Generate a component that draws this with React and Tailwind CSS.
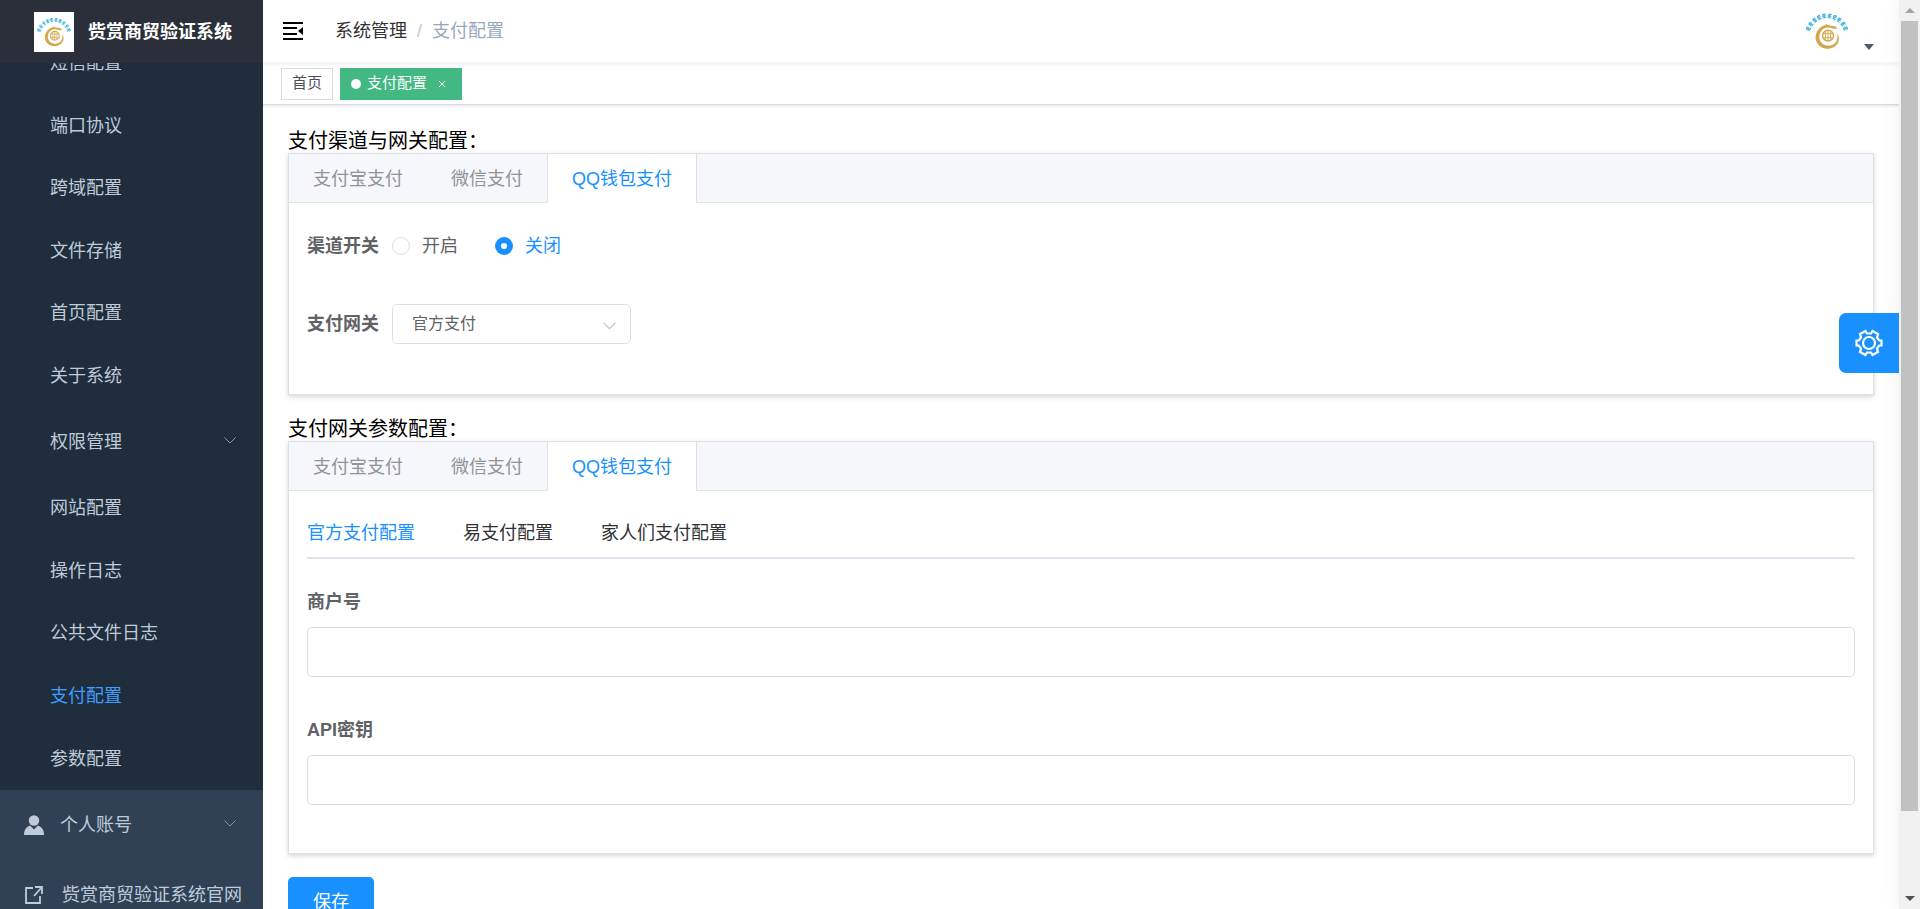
import { useState } from 'react'

const menuTop = ['短信配置', '端口协议', '跨域配置', '文件存储', '首页配置', '关于系统']
const menuBottom = ['网站配置', '操作日志', '公共文件日志', '支付配置', '参数配置']
const channels = ['支付宝支付', '微信支付', 'QQ钱包支付']
const gateways = ['官方支付配置', '易支付配置', '家人们支付配置']
const ringAngles = [-69, -54, -38, -23, -8, 8, 23, 38, 54, 69]

function Logo({ className }) {
  return (
    <svg viewBox="0 0 48 48" className={className} fill="none" aria-hidden="true">
      {ringAngles.map(a => (
        <path
          key={a}
          transform={`rotate(${a} 24 28.5)`}
          d="M22.400 7.800h3.200M24 7v4.400M22.200 9.400h3.600M22.400 11.200h3.200M22.800 8v2.500"
          stroke="#3bb3da"
          strokeWidth="0.900"
        />
      ))}
      <path
        d="M18.500 20c1.500-1 2.500-1.500 4.500-1.500l-1-1.500c2 1 4 1.500 6 2l4 .500 2 2.500-4.500-.300c-4-1.700-8-1.200-10.500 1.800-3.500 4-3 9.500.500 12.500 4 3.300 10.500 2.500 13.500-2 1.700-3 1.500-6 0-8.500 3 3 3.500 8 .500 11.500-4 5-12 5.500-16.500 1.500-5.500-4.500-5.500-13.500 1.500-18.500z"
        fill="#d2a84f"
      />
      <circle cx="25" cy="28.500" r="5.200" stroke="#d2a84f" strokeWidth="1.400" />
      <path d="M21 26.500h8M21 30.500h8M25 23.500v10M22.500 24.500v8M27.500 24.500v8" stroke="#d2a84f" strokeWidth="0.900" />
    </svg>
  )
}

function Chevron({ className }) {
  return (
    <svg viewBox="0 0 12 7" className={className} fill="none" stroke="currentColor" aria-hidden="true">
      <path d="M0.500 0.500l5.500 5.500 5.500-5.500" />
    </svg>
  )
}

function SubMenu({ items, active, onSelect, className }) {
  return (
    <ul className={`flex flex-col bg-[#1f2d3d] ${className}`}>
      {items.map(item => (
        <li key={item} className="flex-1 flex">
          <button
            onClick={() => onSelect(item)}
            className={`w-full pl-[50px] text-left cursor-pointer ${active === item ? 'text-[#409eff]' : 'text-[#bfcbd9]'}`}
          >
            {item}
          </button>
        </li>
      ))}
    </ul>
  )
}

function Sidebar() {
  const [active, setActive] = useState('支付配置')

  return (
    <aside className="w-[263px] shrink-0 flex flex-col overflow-hidden bg-[#304156] text-[#bfcbd9]">
      <div className="h-[63px] shrink-0 z-10 flex items-center gap-[14px] pl-[34px] bg-[#2b2f3a]">
        <Logo className="w-10 h-10 bg-white" />
        <h1 className="text-white text-lg font-bold">赀赏商贸验证系统</h1>
      </div>
      <nav className="-mt-[31px] text-lg">
        <SubMenu items={menuTop} active={active} onSelect={setActive} className="h-[375px]" />
        <button className="w-full h-[70px] pl-[50px] pr-[27px] flex items-center justify-between bg-[#1f2d3d] cursor-pointer">
          权限管理
          <Chevron className="w-3 h-[7px] mb-1 text-[#909399]" />
        </button>
        <SubMenu items={menuBottom} active={active} onSelect={setActive} className="h-[313px]" />
        <button className="w-full h-[70px] pl-6 pr-[27px] flex items-center cursor-pointer">
          <svg viewBox="0 0 20 20" className="w-5 h-5 mr-4" fill="currentColor">
            <circle cx="10" cy="5.500" r="5.200" />
            <path d="M0 20c0-5 2-8 6-9.500l4 4 4-4c4 1.500 6 4.500 6 9.500z" />
          </svg>
          <span className="flex-1 text-left">个人账号</span>
          <Chevron className="w-3 h-[7px] mb-1 text-[#909399]" />
        </button>
        <a href="#" className="h-[70px] pl-6 flex items-center whitespace-nowrap">
          <svg viewBox="0 0 20 20" className="w-5 h-5 mr-[18px]" fill="none" stroke="currentColor" strokeWidth="1.800">
            <path d="M9 3H2v15h14v-7M11 2h7v7M18 2l-8 9" />
          </svg>
          赀赏商贸验证系统官网
        </a>
      </nav>
    </aside>
  )
}

function Navbar() {
  return (
    <header className="h-[63px] shrink-0 flex items-center pl-5 pr-[25px] pb-[2px] text-lg shadow-[0_1px_4px_rgba(0,21,41,0.08)]">
      <button aria-label="收起菜单" className="mr-8 cursor-pointer">
        <svg viewBox="0 0 20 18" className="w-5 h-[18px]" fill="none" stroke="#000" strokeWidth="2">
          <path d="M0 1h20M0 6h14M0 12h14M0 17h20" />
          <path d="M20 5v8l-5-4z" fill="#000" stroke="none" />
        </svg>
      </button>
      <div className="flex gap-[10px]">
        <a href="#" className="text-[#303133]">系统管理</a>
        <span className="text-[#c0c4cc]">/</span>
        <span className="text-[#97a8be]">支付配置</span>
      </div>
      <button aria-label="用户菜单" className="ml-auto flex items-end gap-3 cursor-pointer">
        <Logo className="w-[50px] h-[50px]" />
        <svg viewBox="0 0 10 6" className="w-[10px] h-[6px] mb-[6px]" fill="#4f5b6b">
          <path d="M0 0h10l-5 6z" />
        </svg>
      </button>
    </header>
  )
}

function TagsView() {
  return (
    <div className="h-[42px] shrink-0 flex items-center gap-[7px] pl-[18px] border-b border-[#d8dce5] text-[15px] shadow-[0_1px_3px_rgba(0,0,0,0.12)]">
      <a href="#" className="h-8 px-[10px] flex items-center border border-[#d8dce5] text-[#495060]">首页</a>
      <div className="h-8 pl-[11px] pr-4 flex items-center bg-[#42b983] text-white">
        <span className="w-[10px] h-[10px] mr-[6px] rounded-full bg-white" />
        <a href="#">支付配置</a>
        <button aria-label="关闭标签" className="ml-[11px] cursor-pointer">
          <svg viewBox="0 0 8 8" className="w-2 h-2" stroke="#fff" strokeWidth="1">
            <path d="M1 1l6 6M7 1l-6 6" />
          </svg>
        </button>
      </div>
    </div>
  )
}

function TabCard({ title, children, className = '' }) {
  const [active, setActive] = useState('QQ钱包支付')

  return (
    <section className={className}>
      <h2 className="text-xl leading-6 text-black">{title}</h2>
      <div className="border border-[#dcdfe6] bg-white shadow-[0_2px_5px_rgba(0,0,0,0.16)]">
        <div role="tablist" className="flex h-[49px] bg-[#f5f7fa] border-b border-[#dfe4ed]">
          {channels.map(c => (
            <button
              key={c}
              role="tab"
              aria-selected={active === c}
              onClick={() => setActive(c)}
              className={`px-6 -mb-px text-lg cursor-pointer ${active === c ? 'bg-white text-[#1890ff] border-x border-[#dcdfe6]' : 'text-[#909399]'}`}
            >
              {c}
            </button>
          ))}
        </div>
        {children}
      </div>
    </section>
  )
}

function SwitchRadio({ label, checked, onChange }) {
  return (
    <label className={`flex items-center gap-3 cursor-pointer ${checked ? 'text-[#1890ff]' : 'text-[#606266]'}`}>
      <input
        type="radio"
        name="channel"
        checked={checked}
        onChange={onChange}
        className="appearance-none w-[18px] h-[18px] rounded-full border border-[#dcdfe6] bg-white checked:border-[6px] checked:border-[#1890ff]"
      />
      {label}
    </label>
  )
}

function Field({ id, label }) {
  return (
    <div className="flex flex-col mb-7">
      <label htmlFor={id} className="h-[50px] leading-[50px] font-bold text-[#606266]">{label}</label>
      <input id={id} type="text" className="h-[50px] px-[18px] rounded-[5px] border border-[#dcdfe6] bg-white outline-none" />
    </div>
  )
}

function App() {
  const [status, setStatus] = useState('关闭')
  const [gateway, setGateway] = useState(gateways[0])

  return (
    <div className="relative h-screen flex overflow-hidden bg-white font-['Liberation_Sans','Noto_Sans_CJK_SC',sans-serif]">
      <Sidebar />

      <div className="flex-1 min-w-0 flex flex-col">
        <Navbar />
        <TagsView />
        <main className="flex-1 overflow-hidden px-[25px] pt-6 text-lg">
          <TabCard title="支付渠道与网关配置：">
            <div className="px-[18px] pt-[18px] pb-[25px]">
              <div className="flex items-center h-[50px] mb-7">
                <span className="w-[85px] font-bold text-[#606266]">渠道开关</span>
                <div className="flex gap-[37px]">
                  <SwitchRadio label="开启" checked={status === '开启'} onChange={() => setStatus('开启')} />
                  <SwitchRadio label="关闭" checked={status === '关闭'} onChange={() => setStatus('关闭')} />
                </div>
              </div>
              <div className="flex items-center h-[50px] mb-5">
                <label htmlFor="gateway" className="w-[85px] font-bold text-[#606266]">支付网关</label>
                <div className="relative">
                  <select id="gateway" className="appearance-none w-[239px] h-10 px-[19px] rounded-[5px] border border-[#dcdfe6] bg-white text-base text-[#606266]">
                    <option>官方支付</option>
                    <option>易支付</option>
                    <option>家人们支付</option>
                  </select>
                  <Chevron className="absolute right-[15px] top-[18px] w-[13px] h-2 text-[#c0c4cc] pointer-events-none" />
                </div>
              </div>
            </div>
          </TabCard>

          <TabCard title="支付网关参数配置：" className="mt-[22px]">
            <div className="px-[18px] pt-[18px] pb-5">
              <div role="tablist" className="flex gap-12 h-[50px] mb-[18px] border-b-2 border-[#dfe4ed]">
                {gateways.map(g => (
                  <button
                    key={g}
                    role="tab"
                    aria-selected={gateway === g}
                    onClick={() => setGateway(g)}
                    className={`cursor-pointer ${gateway === g ? 'text-[#1890ff]' : 'text-[#303133]'}`}
                  >
                    {g}
                  </button>
                ))}
              </div>
              <Field id="mchId" label="商户号" />
              <Field id="apiKey" label="API密钥" />
            </div>
          </TabCard>

          <button className="mt-[23px] h-[50px] px-[25px] rounded-[5px] bg-[#1890ff] text-white cursor-pointer">保存</button>
        </main>
      </div>

      {/* right scrollbar */}
      <div className="w-[21px] shrink-0 flex flex-col items-center justify-between bg-[#f1f1f1] shadow-[0_0_20px_rgba(0,0,0,0.06)]">
        <svg viewBox="0 0 10 5" className="w-[10px] h-[5px] my-2" fill="#a3a3a3"><path d="M0 5h10l-5-5z" /></svg>
        <div className="w-[17px] h-[790px] mb-auto bg-[#c1c1c1]" />
        <svg viewBox="0 0 10 5" className="w-[10px] h-[5px] my-2" fill="#505050"><path d="M0 0h10l-5 5z" /></svg>
      </div>

      <button aria-label="设置" className="absolute right-[21px] top-[313px] w-[60px] h-[60px] flex items-center justify-center rounded-l-[7px] bg-[#1890ff] text-white cursor-pointer">
        <svg viewBox="0 0 28 28" className="w-7 h-7" fill="none" stroke="currentColor" strokeWidth="2.200">
          <circle cx="14" cy="14" r="6" />
          <path d="M10.500 2L12 4.500h4L17.500 2 23 5l-1 3.500 2.200 3H26.500v5H24.200l-2.200 3 1 3.500-5.500 3-1.500-2.500h-4L10.500 26 5 23l1-3.500-2.200-3H1.500v-5H3.800l2.200-3L5 5z" />
        </svg>
      </button>
    </div>
  )
}

export default App
